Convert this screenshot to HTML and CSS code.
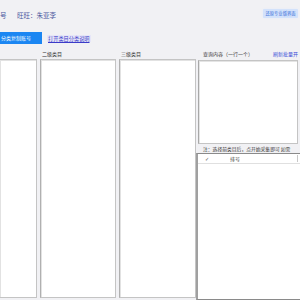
FILE: index.html
```html
<!DOCTYPE html>
<html lang="zh">
<head>
<meta charset="utf-8">
<link rel="stylesheet" href="styles.css">
</head>
<body>
<div class="page">
  <header class="top">
    <span class="acct">号</span>
    <span class="ww">旺旺：朱亚李</span>
    <span class="spacer"></span>
    <button class="restore">还原专业版界面</button>
  </header>
  <div class="toolbar">
    <button class="primary">分类复制账号</button>
    <a class="help">打开类目分类说明</a>
  </div>
  <div class="main">
    <div class="col c1">
      <div class="lbl">&nbsp;</div>
      <div class="box"></div>
    </div>
    <div class="col c2">
      <div class="lbl">二级类目</div>
      <div class="box"></div>
    </div>
    <div class="col c3">
      <div class="lbl">三级类目</div>
      <div class="box"></div>
    </div>
    <div class="right">
      <div class="rhead">
        <span>查询内容（一行一个）</span>
        <a class="more">刷新批量开</a>
      </div>
      <div class="query"></div>
      <div class="note">注：选择前类目后，点开始采集即可 如需</div>
      <div class="table">
        <div class="thead">
          <span class="tchk">✓</span>
          <span class="tno">排号</span>
          <span class="tsep"></span>
        </div>
      </div>
    </div>
  </div>
</div>
</body>
</html>
```
FILE: styles.css
```css
html, body {
  margin: 0;
  padding: 0;
  background: #f1f1f4;
  font-family: "Noto Sans CJK SC", "Noto Sans", sans-serif;
  overflow: hidden;
}
.page {
  width: 300px;
  height: 300px;
  display: flex;
  flex-direction: column;
}
.top {
  height: 29px;
  display: flex;
  align-items: center;
  box-sizing: border-box;
}
.acct {
  font-size: 6.5px;
  color: #4a58a0;
  width: 17px;
  margin-top: 1px;
}
.ww {
  font-size: 6.5px;
  color: #4a58a0;
  margin-top: 1px;
}
.spacer { flex: 1; }
.restore {
  margin-right: 2px;
  margin-bottom: 3px;
  height: 9px;
  width: 35px;
  padding: 0;
  border: none;
  border-radius: 1px;
  background: #d3e2fb;
  color: #3b6fd9;
  font-family: inherit;
  font-size: 4.3px;
  line-height: 9px;
  box-shadow: 0 0 2px #e3ecfb;
}
.toolbar {
  display: flex;
  align-items: center;
  height: 12px;
  margin-top: 3px;
}
.primary {
  width: 42px;
  height: 12px;
  padding: 0 0 0 1px;
  border: none;
  background: #1b86f2;
  color: #fff;
  font-family: inherit;
  font-size: 5px;
  text-align: left;
  line-height: 12px;
}
.help {
  margin-left: 5px;
  background: #e6e6f8;
  color: #3b3bc8;
  font-size: 5.2px;
  line-height: 7px;
  padding: 0 1px;
  text-decoration: underline;
}
.main {
  display: flex;
  margin-top: 6px;
  flex: 1;
}
.col {
  display: flex;
  flex-direction: column;
}
.c1 { width: 37px; }
.c2 { width: 76px; margin-left: 3px; }
.c3 { width: 77px; margin-left: 3px; }
.lbl {
  font-size: 5px;
  line-height: 7px;
  height: 7px;
  color: #333;
  padding-left: 2px;
  margin-bottom: 2px;
}
.box {
  flex: 1;
  background: #fff;
  border: 1px solid #c4c4c4;
  border-left-color: #b0b0b0;
  box-shadow: inset 1px 1px 0 #e2e2e2;
  margin-bottom: 2px;
}
.c1 .box { border-left: none; }
.right {
  flex: 1;
  display: flex;
  flex-direction: column;
}
.rhead {
  display: flex;
  justify-content: space-between;
  font-size: 5px;
  line-height: 7px;
  height: 7px;
  color: #333;
  padding-left: 7px;
  padding-right: 2px;
  margin-bottom: 3px;
}
.more {
  color: #3b4fd8;
}
.query {
  height: 82px;
  margin-left: 2px;
  margin-right: 2px;
  background: #fff;
  border: 1px solid #c4c4c4;
  border-left-color: #a8a8a8;
  box-shadow: inset 1px 1px 0 #e4e4e4;
}
.note {
  font-size: 4.8px;
  line-height: 7px;
  height: 7px;
  color: #333;
  padding-left: 7px;
  white-space: nowrap;
  overflow: hidden;
  margin-top: 1px;
}
.table {
  flex: 1;
  background: #fff;
  border-top: 1px solid #8a8a8a;
  border-left: 2px solid #a0a0a0;
  border-bottom: 1px solid #8a8a8a;
  margin-top: 1px;
}
.thead {
  display: flex;
  align-items: center;
  height: 9px;
  border-bottom: 1px solid #e0e0e0;
  font-size: 5px;
  color: #444;
}
.tchk {
  margin-left: 7px;
  width: 25px;
  font-family: "DejaVu Sans", sans-serif;
  color: #555;
}
.tno { flex: 1; }
.tsep {
  width: 1px;
  height: 7px;
  background: #c8c8c8;
  margin-right: 2px;
}
```
